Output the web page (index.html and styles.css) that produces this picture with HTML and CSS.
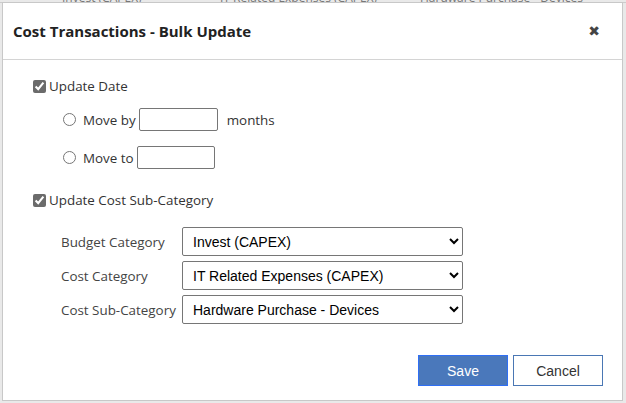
FILE: index.html
```html
<!DOCTYPE html>
<html>
<head lang="en">
    <meta charset="UTF-8">
    <title>Cost Transactions - Bulk Update</title>
    <link rel="stylesheet" href="styles.css">
</head>
<body>
<div class="grid">
    <div class="gridRow">
        <span class="c1">Invest (CAPEX)</span>
        <span class="c2">IT Related Expenses (CAPEX)</span>
        <span class="c3">Hardware Purchase - Devices</span>
    </div>
</div>
<div class="dialog">
    <div class="dialogHead">
        <span class="dialogTitle">Cost Transactions - Bulk Update</span>
        <span class="close">&#x2716;</span>
    </div>
    <div class="dialogBody">
        <label class="check"><input type="checkbox" checked> Update Date</label>
        <div class="radios">
            <label class="radio"><input type="radio" name="mv"> Move by <input class="txt wide" type="text"> <span class="unit">months</span></label>
            <label class="radio"><input type="radio" name="mv"> Move to <input class="txt" type="text"></label>
        </div>
        <label class="check"><input type="checkbox" checked> Update Cost Sub-Category</label>
        <div class="fields">
            <span class="lbl">Budget Category</span>
            <select class="sel"><option>Invest (CAPEX)</option></select>
            <span class="lbl">Cost Category</span>
            <select class="sel"><option>IT Related Expenses (CAPEX)</option></select>
            <span class="lbl">Cost Sub-Category</span>
            <select class="sel"><option>Hardware Purchase - Devices</option></select>
        </div>
    </div>
    <div class="dialogFoot">
        <button class="btn save">Save</button>
        <button class="btn cancel">Cancel</button>
    </div>
</div>
</body>
</html>
```

FILE: styles.css
```css
* {
    margin: 0;
    padding: 0;
    box-sizing: border-box;
}

body {
    width: 626px;
    height: 403px;
    overflow: hidden;
    background: #e9e9e9;
    font-family: "Open Sans", "Liberation Sans", sans-serif;
    color: #333;
}

.grid {
    height: 403px;
    background: #e9e9e9;
}

.gridRow {
    position: relative;
    height: 14px;
    margin-top: -11px;
    font-size: 12px;
    color: #777;
    border-bottom: 1px solid #ccc;
}

.gridRow span {
    position: absolute;
    top: 0;
}

.c1 { left: 62px; }
.c2 { left: 220px; }
.c3 { left: 420px; }

/* dialog over the grid */
.dialog {
    position: absolute;
    left: 2px;
    top: 2px;
    width: 621px;
    height: 399px;
    background: #fff;
    border: 1px solid #c8c8c8;
    display: flex;
    flex-direction: column;
}

.dialogHead {
    height: 57px;
    display: flex;
    align-items: center;
    justify-content: space-between;
    padding: 0 22px 0 10px;
    border-bottom: 1px solid #d4d4d4;
}

.dialogTitle {
    font-size: 15px;
    font-weight: bold;
    color: #222;
}

.close {
    font-size: 14px;
    color: #444;
    font-family: "DejaVu Sans", sans-serif;
}

.dialogBody {
    flex: 1;
    padding: 16px 0 0 30px;
    font-size: 13.4px;
}

.check {
    display: flex;
    align-items: center;
    height: 20px;
}

.check input {
    width: 13px;
    height: 13px;
    margin: 0 3px 0 0;
    accent-color: #6b6b6b;
}

.radios {
    display: flex;
    flex-direction: column;
    gap: 15px;
    padding: 12px 0 21px 30px;
}

.radio {
    display: flex;
    align-items: center;
    height: 23px;
}

.radio input[type=radio] {
    width: 13px;
    height: 13px;
    margin: 0 7px 0 0;
}

.txt {
    width: 78px;
    height: 23px;
    margin-left: 3px;
    border: 1px solid #767676;
    border-radius: 2px;
    font-size: 13px;
}

.wide {
    width: 79px;
}

.unit {
    margin-left: 9px;
}

.fields {
    display: grid;
    grid-template-columns: 121px 281px;
    row-gap: 5px;
    align-items: center;
    padding: 17px 0 0 28px;
}

.lbl {
    color: #444;
}

.sel {
    height: 29px;
    padding: 0 6px;
    border: 1px solid #767676;
    border-radius: 2px;
    background: #fff;
    font-family: "Liberation Sans", Arial, sans-serif;
    font-size: 14px;
    color: #000;
}

.dialogFoot {
    display: flex;
    justify-content: flex-end;
    gap: 5px;
    padding: 0 19px 14px 0;
}

.btn {
    width: 90px;
    height: 31px;
    font-family: "Liberation Sans", Arial, sans-serif;
    font-size: 14px;
    border: 1px solid #4a77b4;
}

.save {
    background: #4a78bb;
    border-color: #2f6ff5;
    color: #fff;
}

.cancel {
    background: #fff;
    color: #333;
}
```
